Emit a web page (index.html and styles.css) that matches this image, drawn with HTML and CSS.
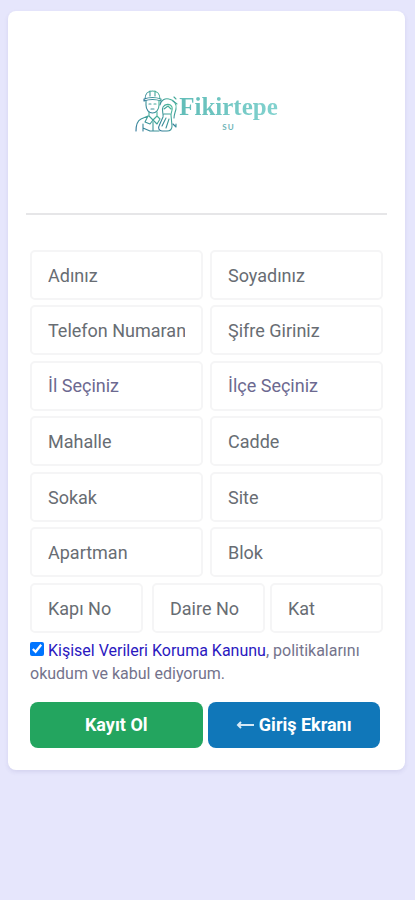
FILE: index.html
```html
<!DOCTYPE html>
<html lang="tr">
<head>
<meta charset="utf-8">
<meta name="viewport" content="width=device-width, initial-scale=1">
<title>Fikirtepe Su</title>
<link rel="stylesheet" href="styles.css">
</head>
<body>
<main class="card">
  <header class="brand">
    <svg class="brand-icon" viewBox="0 0 44 44" aria-hidden="true">
      <defs>
        <linearGradient id="ink" x1="0" y1="1" x2="1" y2="0">
          <stop offset="0" stop-color="#2f7599"/>
          <stop offset="1" stop-color="#4dbd9a"/>
        </linearGradient>
      </defs>
      <g fill="none" stroke="url(#ink)" stroke-width="1.1" stroke-linecap="round" stroke-linejoin="round">
        <path d="M10 9C10 4 13 1 17.500 1S25 4 25 9M15 1v5M20 1v5M9 9q8.500-3 17 0v2q-8.500-3-17 0z"/>
        <path d="M11 11v4c0 5 3 8 6.500 8S24 20 24 15v-4M14 14h2M19 14h2M16 19h3"/>
        <path d="M14 22v4l4 4 4-4v-4M13 26l-7 3c-4 2-5 6-5 12M18 32v9M13 26l-3 6 5 2 3-4 4 4 3-5-3-3M8 34v7M8 38l7 3h9"/>
        <path d="M25 15c1-5 5-7 9-6 5 1 8 5 7 10-1 4-2 6-2 9"/>
        <path d="M28 17c2-3 7-4 9 0 1 3-1 5-1 8l1 11c0 3-2 5-5 5h-5c-3 0-4-3-3-5l4-9c1-3-2-7 0-10zM29 19l4-3 3 3M29 24h6M31 28l-4 8M34 29l-3 9"/>
        <path d="M38 11l4 3M39 7l2 2M38 34l3 3M41 34v3"/>
      </g>
    </svg>
    <div class="wordmark">
      <span class="brand-name">Fikirtepe</span>
      <span class="brand-sub">SU</span>
    </div>
  </header>
  <form class="form">
    <div class="group">
      <div class="row">
        <input class="field" type="text" placeholder="Adınız" aria-label="Adınız">
        <input class="field" type="text" placeholder="Soyadınız" aria-label="Soyadınız">
      </div>
      <div class="row">
        <input class="field" type="tel" placeholder="Telefon Numaran" aria-label="Telefon Numaran">
        <input class="field" type="password" placeholder="Şifre Giriniz" aria-label="Şifre Giriniz">
      </div>
    </div>
    <div class="group">
      <div class="row">
        <select class="field" aria-label="İl Seçiniz"><option>İl Seçiniz</option></select>
        <select class="field" aria-label="İlçe Seçiniz"><option>İlçe Seçiniz</option></select>
      </div>
      <div class="row">
        <input class="field" type="text" placeholder="Mahalle" aria-label="Mahalle">
        <input class="field" type="text" placeholder="Cadde" aria-label="Cadde">
      </div>
    </div>
    <div class="group">
      <div class="row">
        <input class="field" type="text" placeholder="Sokak" aria-label="Sokak">
        <input class="field" type="text" placeholder="Site" aria-label="Site">
      </div>
      <div class="row">
        <input class="field" type="text" placeholder="Apartman" aria-label="Apartman">
        <input class="field" type="text" placeholder="Blok" aria-label="Blok">
      </div>
    </div>
    <div class="row row-door">
      <input class="field" type="text" placeholder="Kapı No" aria-label="Kapı No">
      <input class="field" type="text" placeholder="Daire No" aria-label="Daire No">
      <input class="field" type="text" placeholder="Kat" aria-label="Kat">
    </div>
    <div class="consent">
      <input class="check" type="checkbox" id="kvkk" checked>
      <label for="kvkk"><a href="#kvkk">Kişisel Verileri Koruma Kanunu</a><span>, politikalarını</span> <span>okudum ve kabul ediyorum.</span></label>
    </div>
    <div class="actions">
      <button class="btn btn-save" type="submit">Kayıt Ol</button>
      <button class="btn btn-login" type="button"><svg class="arrow" viewBox="0 0 19 10" aria-hidden="true"><path d="M18 5H2M5 2L2 5l3 3"/></svg>Giriş Ekranı</button>
    </div>
  </form>
</main>
</body>
</html>
```
FILE: styles.css
```css
* { box-sizing: border-box; }

body {
  margin: 0;
  padding: 11px 10px 11px 8px;
  min-height: 100vh;
  background: #e6e6fc;
  color: #74738c;
  font-family: Roboto, sans-serif;
}

.card {
  padding: 0 18px 22px;
  background: #fff;
  border-radius: 8px;
  box-shadow: 0 2px 4px rgba(80, 70, 150, 0.12);
}

.brand {
  display: flex;
  justify-content: center;
  align-items: flex-start;
  padding: 79px 0;
  border-bottom: 2px solid #e6e6e8;
}

.brand-icon { width: 44px; height: 44px; }

.wordmark {
  display: flex;
  flex-direction: column;
  align-items: center;
  padding-top: 3px;
  font-family: "Liberation Serif", serif;
  font-weight: 700;
}

.brand-name {
  font-size: 25px;
  line-height: 28px;
  color: transparent;
  background: linear-gradient(90deg, #62bdb8, #82d2cf);
  background-clip: text;
}

.brand-sub {
  font-family: Lato, sans-serif;
  font-size: 8px;
  line-height: 12px;
  letter-spacing: 1px;
  color: #6fb5b7;
}

.form {
  display: flex;
  flex-direction: column;
  gap: 6px;
  padding: 35px 4px 0;
}

.group { display: flex; flex-direction: column; gap: 5px; }
.row { display: flex; gap: 7px; }

.field {
  flex: 1 1 0;
  min-width: 0;
  height: 50px;
  padding: 0 16px;
  border: 2px solid #f5f5f6;
  border-radius: 5px;
  background: #fff;
  color: #6c6990;
  font: 400 18px/24px Roboto, sans-serif;
  appearance: none;
}

.field::placeholder { color: #686d73; opacity: 1; }

.row-door { gap: 5px; }
.row-door .field:first-child { margin-right: 4px; }

.consent { font-size: 16px; line-height: 23px; }
.check { width: 14px; height: 14px; margin: 0; }
.consent a { color: #2a18c0; text-decoration: none; }

.actions { display: flex; gap: 5px; padding: 11px 3px 0 0; }

.btn {
  flex: 1 1 0;
  height: 46px;
  padding: 0;
  border: 0;
  border-radius: 8px;
  color: #fff;
  font: 700 18px/24px Roboto, sans-serif;
}

.btn-save { background: #23a55f; }
.btn-login { display: flex; align-items: center; justify-content: center; gap: 4px; background: #1077b9; }

.arrow { width: 19px; height: 10px; fill: none; stroke: #d5e9f6; stroke-width: 2; }
```
